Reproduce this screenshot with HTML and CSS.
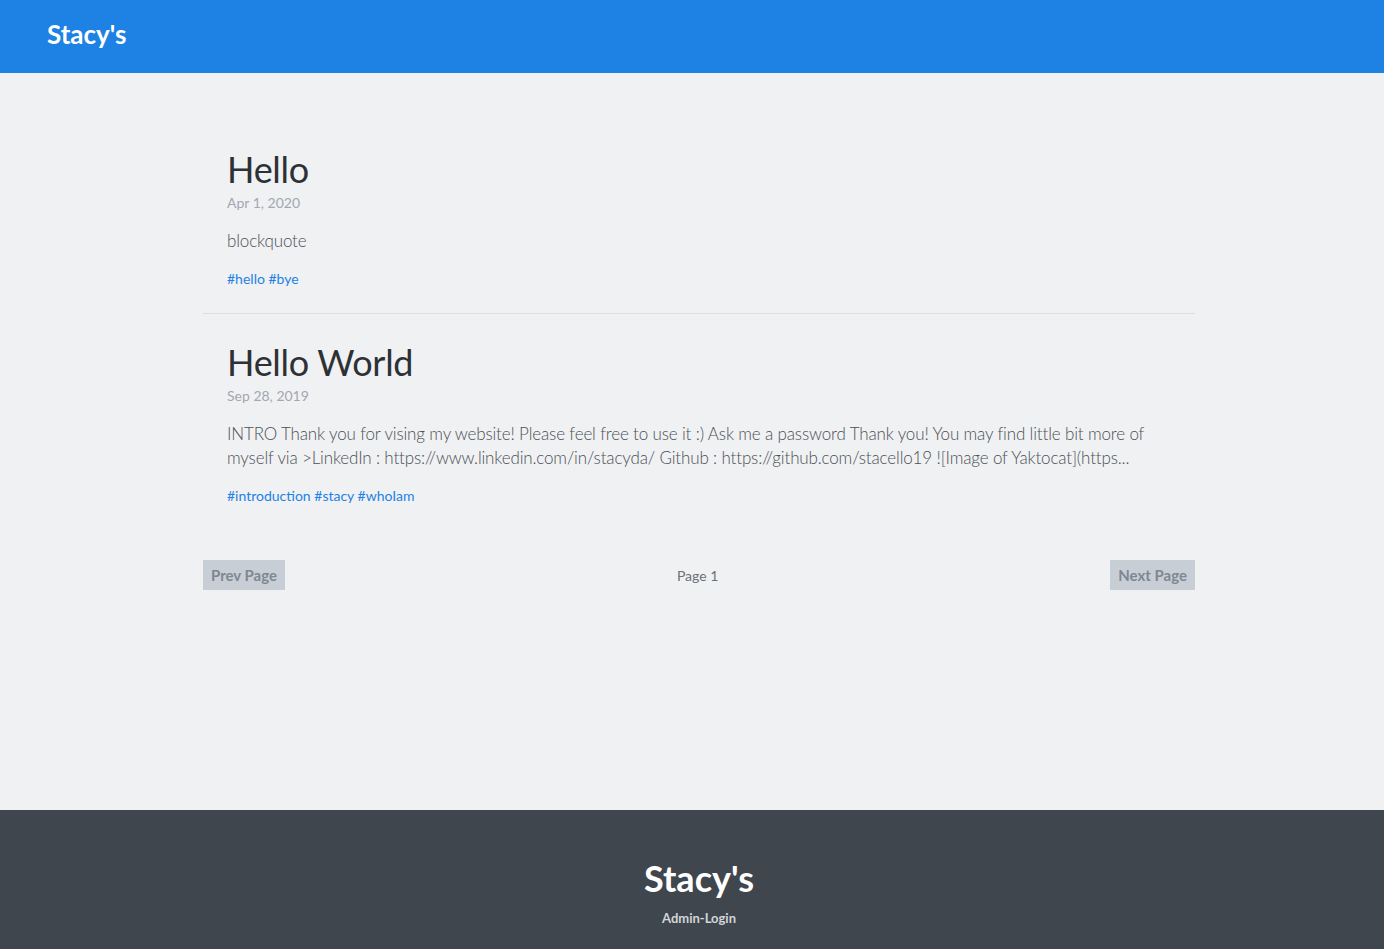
FILE: index.html
```html
<!DOCTYPE html>
<html lang="en">
<head>
<meta charset="utf-8">
<title>Stacy's</title>
<link rel="stylesheet" href="styles.css">
</head>
<body>
<div class="page">
  <header class="topbar">
    <a class="brand" href="#">Stacy's</a>
  </header>
  <main class="main">
    <div class="container">
      <article class="post">
        <h2 class="post-title">Hello</h2>
        <div class="post-date">Apr 1, 2020</div>
        <p class="post-excerpt">blockquote</p>
        <div class="post-tags"><a href="#">#hello</a> <a href="#">#bye</a></div>
      </article>
      <article class="post last">
        <h2 class="post-title">Hello World</h2>
        <div class="post-date">Sep 28, 2019</div>
        <p class="post-excerpt">INTRO Thank you for vising my website! Please feel free to use it :) Ask me a password Thank you! You may find little bit more of myself via &gt;LinkedIn : https://www.linkedin.com/in/stacyda/ Github : https://github.com/stacello19 ![Image of Yaktocat](https...</p>
        <div class="post-tags"><a href="#">#introduction</a> <a href="#">#stacy</a> <a href="#">#whoIam</a></div>
      </article>
      <nav class="pager">
        <button class="pager-btn">Prev Page</button>
        <span class="pager-label">Page 1</span>
        <button class="pager-btn">Next Page</button>
      </nav>
    </div>
  </main>
  <footer class="footer">
    <div class="footer-brand">Stacy's</div>
    <a class="footer-link" href="#">Admin-Login</a>
  </footer>
</div>
</body>
</html>
```
FILE: styles.css
```css
* { box-sizing: border-box; }
html, body { margin: 0; padding: 0; }
body {
  font-family: Lato, "Open Sans", sans-serif;
  background: #f0f1f3;
  color: #2f3338;
}
.page {
  min-height: 949px;
  display: flex;
  flex-direction: column;
}
.topbar {
  height: 73px;
  background: #1e82e4;
  display: flex;
  align-items: center;
  padding: 0 47px;
}
.brand {
  color: #fff;
  font-weight: 700;
  font-size: 26px;
  text-decoration: none;
  margin-top: -6px;
}
.main {
  flex: 1;
  padding-top: 72px;
  padding-left: 14px;
}
.container {
  width: 992px;
  margin: 0 auto;
}
.post {
  padding: 0 24px 24px;
  border-bottom: 1px solid #dcdee2;
  margin-bottom: 24px;
}
.post.last { border-bottom: none; margin-bottom: 30px; }
.post-title {
  margin: 0;
  font-weight: 400;
  font-size: 36px;
  line-height: 48px;
  color: #2d3136;
  letter-spacing: -0.3px;
}
.post-date {
  font-size: 14px;
  line-height: 20px;
  color: #a2a8b0;
}
.post-excerpt {
  margin: 16px 0;
  font-size: 17px;
  font-weight: 300;
  line-height: 24px;
  color: #4b5056;
  letter-spacing: -0.15px;
}
.post-tags {
  font-size: 14px;
  line-height: 20px;
}
.post-tags a {
  color: #1e82e4;
  text-decoration: none;
}
.pager {
  display: flex;
  align-items: center;
  justify-content: space-between;
  margin-top: 8px;
}
.pager-btn {
  font-family: inherit;
  border: none;
  background: #c8ced6;
  color: #7f8791;
  font-weight: 700;
  font-size: 15px;
  height: 30px;
  padding: 0 8px;
}
.pager-label {
  font-size: 14px;
  color: #6b7178;
}
.footer {
  height: 139px;
  background: #40464e;
  display: flex;
  flex-direction: column;
  align-items: center;
  padding-top: 48px;
  padding-left: 14px;
}
.footer-brand {
  color: #fff;
  font-weight: 700;
  font-size: 36px;
  line-height: 40px;
}
.footer-link {
  margin-top: 12px;
  color: #d2d5d9;
  font-weight: 700;
  font-size: 13px;
  text-decoration: none;
}
```
